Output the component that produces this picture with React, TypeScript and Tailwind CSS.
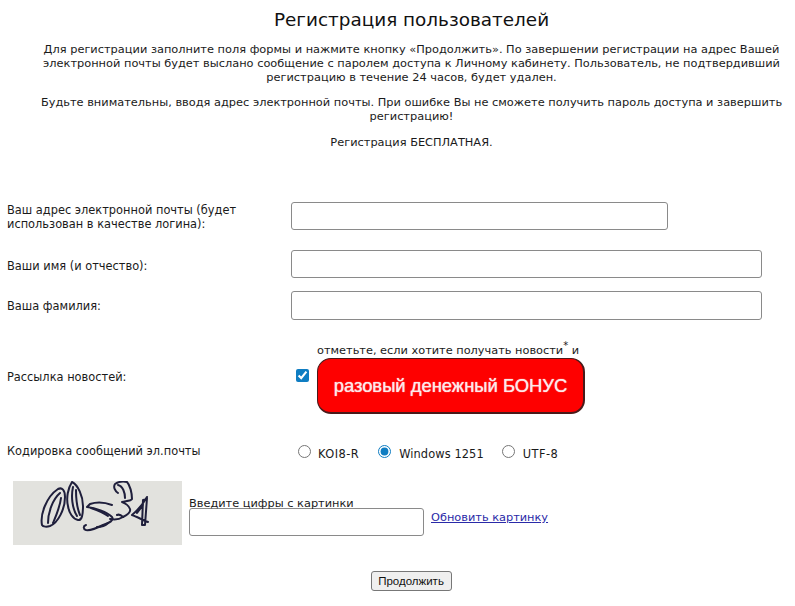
export default function App() {
  const input = "block h-[28px] rounded-[3px] border border-[#8a8a8a] bg-white";
  return (
    <div className="w-[795px] h-[606px] overflow-hidden bg-white text-[11.4px] leading-[14px] text-[#1a1a1a] font-['DejaVu_Sans','Liberation_Sans',sans-serif]">
      <div className="pl-[28px] text-center">
        <h1 className="pt-[9px] text-[18.4px] leading-[21px] font-normal text-[#111]">Регистрация пользователей</h1>
        <div className="mt-[12px] text-[11.36px]">
          <p className="px-[8px]">
            Для регистрации заполните поля формы и нажмите кнопку «Продолжить». По завершении регистрации на адрес Вашей<br />
            электронной почты будет выслано сообщение с паролем доступа к Личному кабинету. Пользователь, не подтвердивший<br />
            регистрацию в течение 24 часов, будет удален.
          </p>
          <p className="mt-[11px]">
            Будьте внимательны, вводя адрес электронной почты. При ошибке Вы не сможете получить пароль доступа и завершить<br />
            регистрацию!
          </p>
          <p className="mt-[12px]">Регистрация БЕСПЛАТНАЯ.</p>
        </div>
      </div>

      <div className="mt-[53px] pl-[7px]">
        <div className="flex items-center h-[28px]">
          <div className="w-[284px] pr-[30px] pt-[2px]">Ваш адрес электронной почты (будет использован в качестве логина):</div>
          <div className={`${input} w-[377px]`} />
        </div>
        <div className="mt-[20px] flex items-center h-[28px]">
          <div className="w-[284px] pt-[4px]">Ваши имя (и отчество):</div>
          <div className={`${input} w-[471px]`} />
        </div>
        <div className="mt-[13px] flex items-center h-[29px]">
          <div className="w-[284px]">Ваша фамилия:</div>
          <div className={`${input} w-[471px] h-[29px]`} />
        </div>

        <div className="mt-[22px] flex">
          <div className="w-[284px] pt-[28px]">Рассылка новостей:</div>
          <div className="flex">
            <div className="w-[26px] pt-[27px]">
              <input type="checkbox" readOnly checked className="block ml-[5px] w-[13px] h-[13px] accent-[#0f7dc2]" />
            </div>
            <div>
              <div className="h-[16px] leading-[16px] whitespace-nowrap text-[11.33px]">
                отметьте, если хотите получать новости<sup className="text-[10px] leading-none">*</sup> и
              </div>
              <div className="w-[268px] h-[56px] flex items-center justify-center rounded-[14px] bg-[#fe0000] border-b-2 border-r-2 border-l border-t border-[#4a1a1a] text-[18.4px] text-[#fde8e8] [text-shadow:0_0_1px_#fff] font-['Liberation_Sans',sans-serif]">
                разовый денежный БОНУС
              </div>
            </div>
          </div>
        </div>

        <div className="mt-[28px] flex items-center h-[20px]">
          <div className="w-[284px] -mt-[3px]">Кодировка сообщений эл.почты</div>
          <div className="flex items-center pt-[4px]">
            <input type="radio" readOnly name="enc" className="block ml-[7px] w-[13px] h-[13px] -mt-[5px]" />
            <span className="ml-[7px] tracking-[0.45px]">KOI8-R</span>
            <input type="radio" readOnly name="enc" defaultChecked className="block ml-[19px] w-[13px] h-[13px] -mt-[5px] accent-[#0f7dc2]" />
            <span className="ml-[8px] tracking-[0.1px]">Windows 1251</span>
            <input type="radio" readOnly name="enc" className="block ml-[18px] w-[13px] h-[13px] -mt-[5px]" />
            <span className="ml-[8px] tracking-[0.45px]">UTF-8</span>
          </div>
        </div>

        <div className="mt-[19px] ml-[6px] flex">
          <svg width="169" height="64" viewBox="0 0 169 64" className="block bg-[#e2e2de]" fill="none" stroke="#1f1f3c" strokeWidth="2" strokeLinecap="round" strokeLinejoin="round">
            <path d="M29 44c-2-10 4-28 16-36 4-2 7 1 7 8 0 12-7 26-15 29-3 1-7 1-8-1z" />
            <path d="M35 42c0-11 5-24 12-30M40 42c3-7 7-16 8-25" />
            <path d="M59 1c-4 6-6 16-4 24 1 7 5 13 10 14 4 1 5-6 5-14 0-10-5-21-11-24z" />
            <path d="M60 6c-2 9-1 21 4 29M63 9c0 8 1 18 4 25" />
            <path d="M99 24c-8-3-16-3-22-1l-3 3c8 1 20 5 25 10 2 3-2 6-9 8-6 3-12 6-17 5-3-1-3-4 0-5" />
            <path d="M78 27c6 2 12 4 17 8M84 46c4 0 8-1 11-4" />
            <path d="M97 38c5 1 10 0 13-2 4-2 8-5 7-8-1-3-5-6-8-7 4-1 9-1 10-3 0-6-2-14-5-17-4-1-9 0-12 2-2 3 0 7 3 9" />
            <path d="M105 4c5 1 7 8 7 13M110 36c-2-2-4-3-6-2" />
            <path d="M134 16c-4 7-9 13-15 18 5 2 11 5 16 7M134 16c-1 3-3 3-4 3l-1 25h3l2-27M124 32l6-8" />
          </svg>
          <div className="ml-[7px] pt-[14px]">
            <div className="h-[13px] leading-[16px] text-[11.33px]">Введите цифры с картинки</div>
            <div className={`${input} w-[235px]`} />
          </div>
          <a href="#" className="ml-[7px] mt-[29px] h-[14px] text-[11.33px] text-[#2a2aa8] underline">Обновить картинку</a>
        </div>

        <div className="mt-[26px] flex justify-center pl-[20px]">
          <div className="w-[81px] h-[20px] flex items-center justify-center rounded-[3px] border border-[#777] bg-[#efefef] text-[11.5px] text-[#111] font-['Liberation_Sans',sans-serif]">Продолжить</div>
        </div>
      </div>
    </div>
  );
}
